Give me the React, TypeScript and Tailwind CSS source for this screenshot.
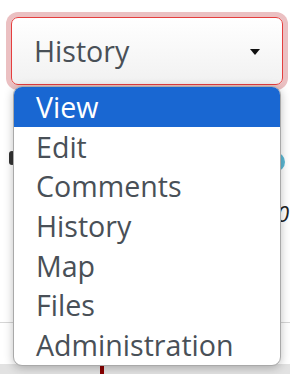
import React from "react";

const OPTIONS = ["View", "Edit", "Comments", "History", "Map", "Files", "Administration"];

export default function App() {
  return (
    <div
      className="relative h-[374px] w-[290px] overflow-hidden bg-white"
      style={{ fontFamily: '"Open Sans", sans-serif' }}
    >
      {/* page behind the menu */}
      <div className="flex flex-col pt-[17px]">
        <div className="pl-[11px] pr-[7px]">
          <div className="flex h-[68px] items-center justify-between rounded-[7px] border border-[#e53e3e] bg-gradient-to-b from-white to-[#f1f1f1] pl-[22px] pr-[22px] shadow-[0_0_0_5px_#ebc0c2]">
            <span className="text-[28.6px] leading-none text-[#495057]">History</span>
            <svg width="10" height="6" viewBox="0 0 10 6" className="mt-[2px]">
              <path d="M0 0h10L5 6z" fill="#111" />
            </svg>
          </div>
        </div>
        <div className="flex h-[110px] items-start justify-between pl-[9px] pr-[5px] pt-[66px]">
          <div className="h-[14px] w-[6px] rounded-full bg-[#333]" />
          <div className="mt-[1px] h-[20px] w-[20px] rounded-full bg-[#5bb8d4]" />
        </div>
        <div className="flex h-[35px] items-center justify-end">
          <span className="pr-[1px] text-[22px] italic leading-none text-[#222]">0</span>
        </div>
        <div className="mt-[92px] h-px bg-[#d6d6d6]" />
        <div className="mt-[41px] flex h-[20px] bg-[#e2e2e2] pl-[100px]">
          <div className="h-full w-[4px] bg-[#8b0000]" />
        </div>
      </div>

      {/* open dropdown */}
      <ul className="absolute left-[13px] top-[86px] w-[268px] overflow-hidden rounded-[9px] border border-[#a9a9a9] bg-white shadow-[0_2px_10px_rgba(0,0,0,0.25)]">
        {OPTIONS.map((o, i) => (
          <li
            key={o}
            className={`h-[39.7px] pl-[22px] text-[28.6px] leading-[39.7px] ${
              i === 0 ? "bg-[#1967d2] text-white" : "text-[#495057]"
            }`}
          >
            {o}
          </li>
        ))}
      </ul>
    </div>
  );
}
